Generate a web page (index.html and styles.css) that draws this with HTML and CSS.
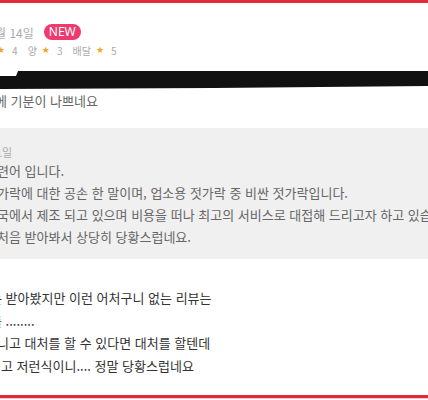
FILE: index.html
```html
<!DOCTYPE html>
<html lang="ko">
<head>
    <meta charset="UTF-8">
    <meta name="viewport" content="width=device-width, initial-scale=1.0">
    <title>리뷰</title>
    <link rel="stylesheet" href="styles.css">
</head>
<body>
    <div class="page">
        <div class="review">
            <div class="review-meta">
                <span class="date">월 14일</span>
                <span class="badge-new">NEW</span>
            </div>
            <div class="scores">
                <span class="score"><span class="star">★</span><span class="score-value">4</span></span>
                <span class="score"><span class="score-label">양</span><span class="star">★</span><span class="score-value">3</span></span>
                <span class="score"><span class="score-label">배달</span><span class="star">★</span><span class="score-value">5</span></span>
            </div>
            <div class="redacted"></div>
            <p class="review-text">에 기분이 나쁘네요</p>
        </div>

        <div class="owner-reply">
            <div class="reply-date">1일</div>
            <p class="reply-line">련어 입니다.</p>
            <p class="reply-line">가락에 대한 공손 한 말이며, 업소용 젓가락 중 비싼 젓가락입니다.</p>
            <p class="reply-line">국에서 제조 되고 있으며 비용을 떠나 최고의 서비스로 대접해 드리고자 하고 있습니다.</p>
            <p class="reply-line">처음 받아봐서 상당히 당황스럽네요.</p>
        </div>

        <div class="reply-more">
            <p class="more-line cut-lg">는 받아봤지만 이런 어처구니 없는 리뷰는</p>
            <p class="more-line cut-lg">를 ........</p>
            <p class="more-line cut-sm">니고 대처를 할 수 있다면 대처를 할텐데</p>
            <p class="more-line cut-none">고 저런식이니.... 정말 당황스럽네요</p>
        </div>
    </div>
</body>
</html>
```

FILE: styles.css
```css
body {
    margin: 0;
    width: 428px;
    height: 400px;
    overflow: hidden;
    background-color: #fff;
    font-family: "Noto Sans CJK KR", "Noto Sans", sans-serif;
}

p {
    margin: 0;
    white-space: nowrap;
}

.page {
    height: 398px;
    box-sizing: border-box;
    border-top: 3px solid #e12b3b;
    border-bottom: 3px solid #e12b3b;
    box-shadow: 0 1px 0 #f4c3c7;
    overflow: hidden;
    display: flex;
    flex-direction: column;
}

.review {
    padding-top: 19px;
}

.review-meta {
    display: flex;
    align-items: center;
    height: 20px;
    margin-left: -5px;
}

.date {
    font-size: 12px;
    color: #aaa;
}

.badge-new {
    margin-left: 10px;
    padding: 0 5px;
    background-color: #ee3a6d;
    color: #fff;
    font-family: "Noto Sans", sans-serif;
    font-size: 12px;
    line-height: 16px;
    border-radius: 8px;
}

.scores {
    display: flex;
    align-items: center;
    gap: 10px;
    height: 16px;
    margin-left: -3px;
    font-size: 10px;
    color: #aaa;
}

.score {
    display: flex;
    align-items: center;
}

.star {
    margin: 0 7px 0 5px;
    font-family: "DejaVu Sans", sans-serif;
    font-size: 9px;
    color: #f0a52a;
}

.score:first-child .star {
    margin-left: 0;
}

.redacted {
    height: 18px;
    margin-top: 13px;
    background-color: #111;
    clip-path: polygon(0 5px, 16px 5px, 18px 0, 100% 0, 100% 15px, 50% 17px, 0 18px);
}

.review-text {
    margin: 2px 0 0 -5px;
    font-size: 13px;
    line-height: 20px;
    color: #666;
}

.owner-reply {
    margin-top: 17px;
    padding: 16px 0 11px;
    background-color: #f0f0f0;
    color: #666;
}

.reply-date {
    margin-left: -4px;
    font-size: 11px;
    line-height: 16px;
    color: #aaa;
}

.reply-line {
    margin-left: -3px;
    font-size: 13px;
    line-height: 22px;
}

.reply-more {
    margin-top: 28px;
    color: #333;
}

.more-line {
    font-size: 13px;
    line-height: 22.5px;
}

.cut-lg {
    margin-left: -10px;
}

.cut-sm {
    margin-left: -3px;
}

.cut-none {
    margin-left: 1px;
}
```
